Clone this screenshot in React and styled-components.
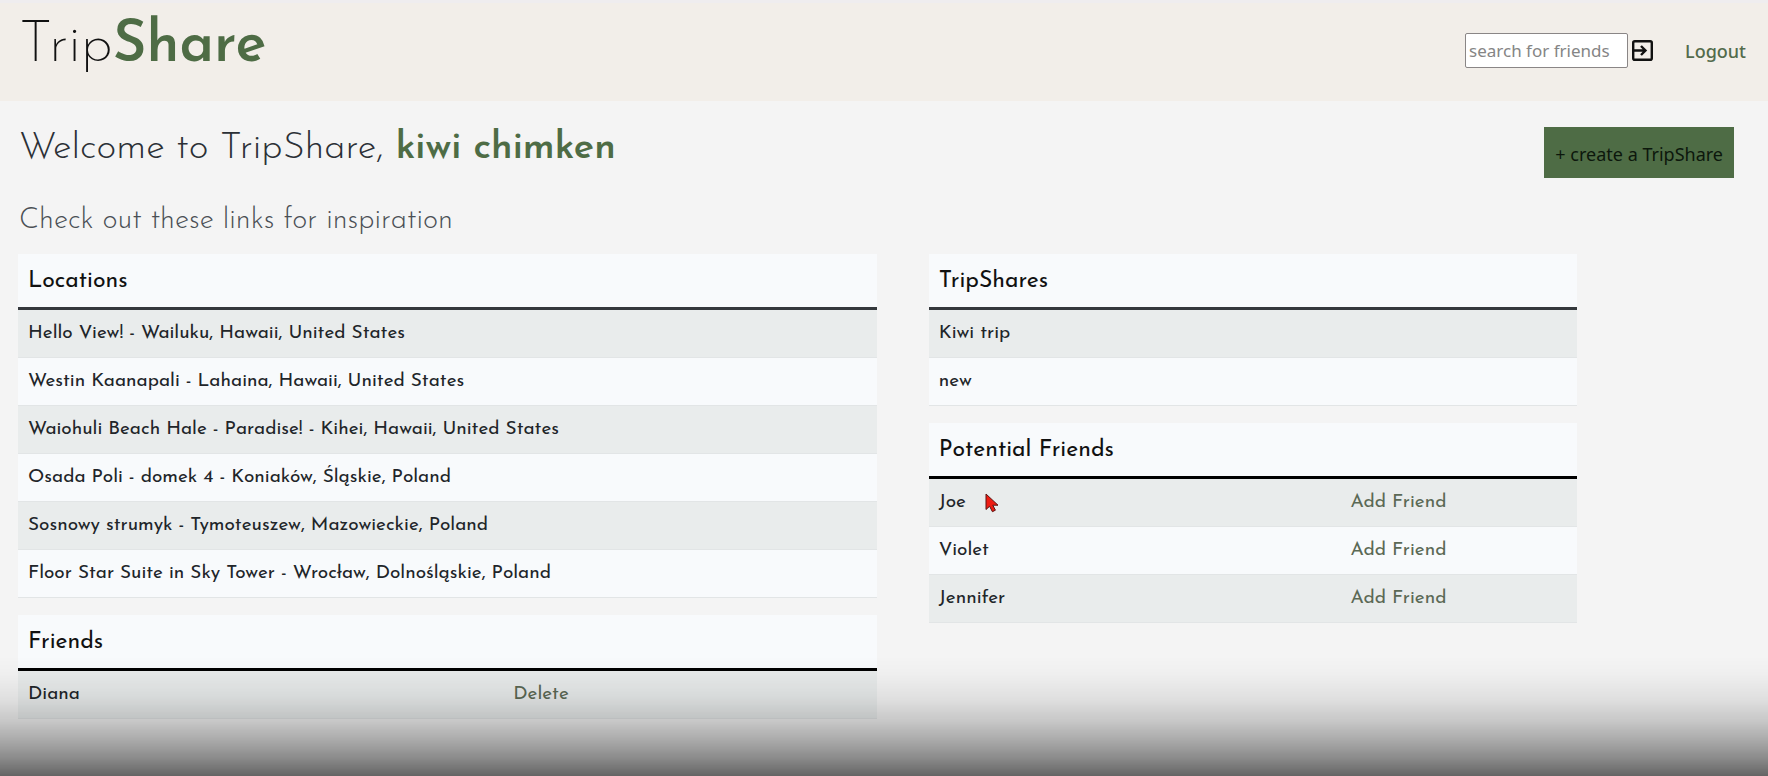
import React from "react";
import styled, { createGlobalStyle } from "styled-components";

const display = `"Josefin Sans", Lato, "Liberation Sans", sans-serif`;
const ui = `"Segoe UI", "Noto Sans", "Open Sans", sans-serif`;
const green = "#4e6c45";

const GlobalStyle = createGlobalStyle`
  *, *::before, *::after { box-sizing: border-box; }
  body {
    margin: 0;
    background: #f4f4f4;
    color: #212529;
    font-family: ${display};
  }
`;

const Page = styled.div`
  position: relative;
  min-height: 100vh;
`;

const Header = styled.header`
  display: flex;
  justify-content: space-between;
  align-items: flex-start;
  height: 101px;
  padding: 0 22px 0 19px;
  background: #f2eee9;
  border-top: 3px solid #efedef;
`;

const Logo = styled.h1`
  margin: 0;
  padding-top: 12px;
  font-size: 58px;
  line-height: 64px;
  font-weight: 200;
  color: #111;
`;

const Accent = styled.span`
  font-weight: 600;
  color: ${green};
`;

const HeaderTools = styled.div`
  display: flex;
  align-items: center;
  padding-top: 30px;
`;

const SearchForm = styled.form`
  display: flex;
  align-items: center;
  gap: 4px;
  margin-right: 32px;
`;

const SearchInput = styled.input`
  width: 163px;
  height: 35px;
  padding: 0 3px;
  border: 1px solid #8a8686;
  border-radius: 2px;
  background: #fff;
  font-family: ${ui};
  font-size: 17px;
  &::placeholder { color: #858585; opacity: 1; }
`;

const IconButton = styled.button`
  display: flex;
  padding: 0;
  border: 0;
  background: none;
  color: #111;
`;

const LogoutLink = styled.a`
  font-family: ${ui};
  font-size: 18px;
  font-weight: 500;
  color: #536b4c;
  text-decoration: none;
`;

const Intro = styled.section`
  display: flex;
  justify-content: space-between;
  align-items: flex-start;
  padding: 20px 34px 0 19px;
`;

const Welcome = styled.h2`
  margin: 0;
  padding-top: 6px;
  font-size: 38px;
  line-height: 44px;
  font-weight: 300;
  color: #2b3036;
`;

const Tagline = styled.h3`
  margin: 0;
  padding-top: 32px;
  font-size: 29px;
  line-height: 36px;
  font-weight: 300;
  color: #4a4f55;
`;

const CreateButton = styled.button`
  margin-top: 6px;
  height: 51px;
  padding: 2px 11px 0;
  border: 0;
  background: ${green};
  color: #0c170c;
  font-family: ${ui};
  font-size: 18px;
  white-space: nowrap;
`;

const Columns = styled.main`
  display: grid;
  grid-template-columns: 53fr 40fr;
  column-gap: 52px;
  padding: 15px 191px 56px 18px;
`;

const Column = styled.div`
  display: flex;
  flex-direction: column;
  gap: 17px;
`;

const Table = styled.table`
  width: 100%;
  border-collapse: separate;
  border-spacing: 0;
  table-layout: fixed;
`;

const HeadCell = styled.th`
  height: 56px;
  padding: 2px 10px 0;
  border-bottom: 3px solid ${(p) => p.$rule};
  background: #f8fafc;
  color: #111;
  font-size: 23px;
  line-height: 28px;
  font-weight: 400;
  text-align: left;
`;

const Row = styled.tr`
  background: #f8fafc;
  &:nth-child(odd) { background: #e9ecec; }
`;

const Cell = styled.td`
  position: relative;
  height: 48px;
  padding: 0 10px;
  border-bottom: 1px solid #e2e5e6;
  font-size: 19px;
  font-weight: 400;
  line-height: 24px;
`;

const TextButton = styled.button`
  padding: 0;
  border: 0;
  background: none;
  color: #5b6955;
  font: inherit;
`;

const Pointer = styled.svg`
  position: absolute;
  left: 56px;
  top: 14px;
`;

const Shade = styled.div`
  position: fixed;
  left: 0;
  right: 0;
  bottom: 0;
  height: 120px;
  pointer-events: none;
  background: linear-gradient(
    to bottom,
    rgba(0, 0, 0, 0) 0%,
    rgba(0, 0, 0, 0.02) 15%,
    rgba(0, 0, 0, 0.08) 35%,
    rgba(0, 0, 0, 0.18) 54%,
    rgba(0, 0, 0, 0.31) 71%,
    rgba(0, 0, 0, 0.43) 85%,
    rgba(0, 0, 0, 0.59) 100%
  );
`;

const locations = [
  "Hello View! - Wailuku, Hawaii, United States",
  "Westin Kaanapali - Lahaina, Hawaii, United States",
  "Waiohuli Beach Hale - Paradise! - Kihei, Hawaii, United States",
  "Osada Poli - domek 4 - Koniaków, Śląskie, Poland",
  "Sosnowy strumyk - Tymoteuszew, Mazowieckie, Poland",
  "Floor Star Suite in Sky Tower - Wrocław, Dolnośląskie, Poland",
];

function EnterIcon() {
  return (
    <svg width="21" height="21" viewBox="0 0 21 21" fill="none" stroke="currentColor" strokeWidth="2.4" aria-hidden="true">
      <rect x="1.2" y="1.2" width="18.6" height="18.6" rx="1.6" />
      <path d="M1.5 10.5H13M9 6l4.5 4.5L9 15" />
    </svg>
  );
}

function ArrowPointer() {
  return (
    <Pointer width="14" height="20" viewBox="0 0 14 20" aria-hidden="true">
      <path d="M1 1v15.5l3.6-3.2 2.8 5.4 3-1.5-2.6-5H13z" fill="#ee1c12" stroke="#5a1512" strokeWidth="1" />
    </Pointer>
  );
}

function DataTable({ title, rows, action, nameWidth, rule = "#000", pointerOn }) {
  return (
    <Table>
      {action && (
        <colgroup>
          <col width={nameWidth} />
          <col />
        </colgroup>
      )}
      <thead>
        <tr>
          <HeadCell $rule={rule} colSpan={action ? 2 : 1}>{title}</HeadCell>
        </tr>
      </thead>
      <tbody>
        {rows.map((name) => (
          <Row key={name}>
            <Cell>
              {name}
              {pointerOn === name && <ArrowPointer />}
            </Cell>
            {action && (
              <Cell>
                <TextButton type="button">{action}</TextButton>
              </Cell>
            )}
          </Row>
        ))}
      </tbody>
    </Table>
  );
}

export default function App() {
  return (
    <Page>
      <GlobalStyle />
      <Header>
        <Logo>Trip<Accent>Share</Accent></Logo>
        <HeaderTools>
          <SearchForm onSubmit={(e) => e.preventDefault()}>
            <SearchInput type="text" aria-label="search for friends" placeholder="search for friends" />
            <IconButton type="submit" aria-label="Search"><EnterIcon /></IconButton>
          </SearchForm>
          <LogoutLink href="#logout">Logout</LogoutLink>
        </HeaderTools>
      </Header>
      <Intro>
        <div>
          <Welcome>Welcome to TripShare, <Accent>kiwi chimken</Accent></Welcome>
          <Tagline>Check out these links for inspiration</Tagline>
        </div>
        <CreateButton type="button">+ create a TripShare</CreateButton>
      </Intro>
      <Columns>
        <Column>
          <DataTable title="Locations" rows={locations} rule="#34383c" />
          <DataTable title="Friends" rows={["Diana"]} action="Delete" nameWidth="56.5%" />
        </Column>
        <Column>
          <DataTable title="TripShares" rows={["Kiwi trip", "new"]} rule="#34383c" />
          <DataTable
            title="Potential Friends"
            rows={["Joe", "Violet", "Jennifer"]}
            action="Add Friend"
            nameWidth="63.5%"
            pointerOn="Joe"
          />
        </Column>
      </Columns>
      <Shade />
    </Page>
  );
}
